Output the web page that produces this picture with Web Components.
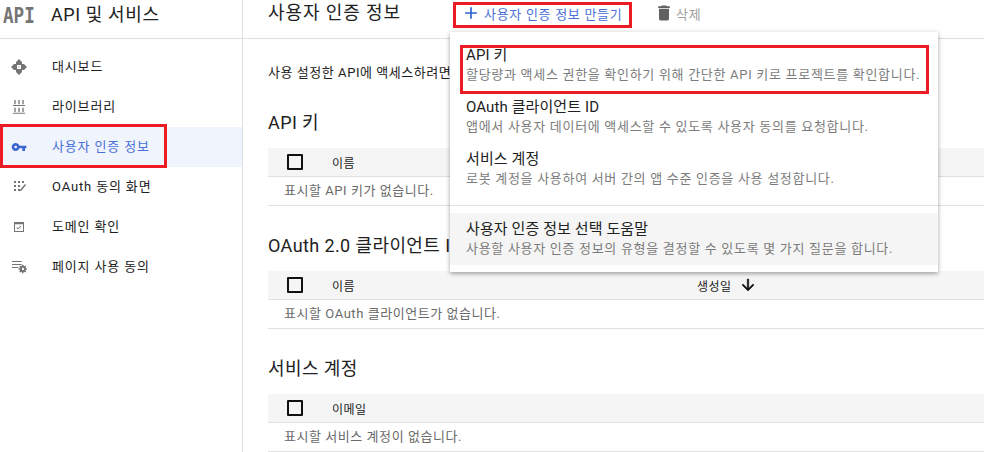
<!doctype html>
<html lang="ko">
<head>
<meta charset="utf-8">
<title>사용자 인증 정보</title>
<style>
  html, body { margin: 0; background: #fff; }
  body {
    font-family: Roboto, "Noto Sans CJK KR", sans-serif;
    color: #212121;
    overflow: hidden;
  }
</style>
</head>
<body>
<app-shell>
  <side-nav slot="side" heading="API 및 서비스">
    <nav-item icon="dashboard">대시보드</nav-item>
    <nav-item icon="library">라이브러리</nav-item>
    <nav-item icon="key" active>사용자 인증 정보</nav-item>
    <nav-item icon="consent">OAuth 동의 화면</nav-item>
    <nav-item icon="domain">도메인 확인</nav-item>
    <nav-item icon="usage">페이지 사용 동의</nav-item>
    <red-mark style="left:0;top:124px;width:167px;height:44px"></red-mark>
  </side-nav>

  <top-bar slot="top" heading="사용자 인증 정보"></top-bar>

  <intro-line>사용 설정한 API에 액세스하려면</intro-line>

  <cred-section heading="API 키" column="이름" empty="표시할 API 키가 없습니다."></cred-section>
  <cred-section heading="OAuth 2.0 클라이언트 I" column="이름" empty="표시할 OAuth 클라이언트가 없습니다." sort="생성일"></cred-section>
  <cred-section heading="서비스 계정" column="이메일" empty="표시할 서비스 계정이 없습니다."></cred-section>

  <drop-menu slot="over">
    <menu-item title="API 키" sub="할당량과 액세스 권한을 확인하기 위해 간단한 API 키로 프로젝트를 확인합니다."></menu-item>
    <menu-item title="OAuth 클라이언트 ID" sub="앱에서 사용자 데이터에 액세스할 수 있도록 사용자 동의를 요청합니다."></menu-item>
    <menu-item title="서비스 계정" sub="로봇 계정을 사용하여 서버 간의 앱 수준 인증을 사용 설정합니다."></menu-item>
    <hr>
    <menu-item hover title="사용자 인증 정보 선택 도움말" sub="사용할 사용자 인증 정보의 유형을 결정할 수 있도록 몇 가지 질문을 합니다."></menu-item>
  </drop-menu>

  <red-mark slot="over" style="left:453px;top:2px;width:179px;height:26px"></red-mark>
  <red-mark slot="over" style="left:460px;top:45px;width:469px;height:49px"></red-mark>
</app-shell>

<script type="module">
const ICONS = {
  dashboard: `<path d="M12 0l4.500 4.500V9h-9V4.500zM12 24l-4.500-4.500V15h9v4.500zM0 12l4.500-4.500H9v9H4.500zM24 12l-4.500 4.500H15v-9h4.500z"/><circle cx="12" cy="12" r="1.200" opacity=".5"/>`,
  library: `<path d="M5 1.500h2V8H5zM11 1.500h2V8h-2zM17 1.500h2V8h-2zM3 9h18v1.500H3zM5 13h2v6.500H5zM11 13h2v6.500h-2zM17 13h2v6.500h-2zM3 20.500h18V22H3z"/>`,
  key: `<path d="M12.65 10C11.83 7.67 9.61 6 7 6c-3.31 0-6 2.69-6 6s2.69 6 6 6c2.61 0 4.83-1.67 5.65-4H17v4h4v-4h2v-4H12.65zM7 14c-1.1 0-2-.9-2-2s.9-2 2-2 2 .9 2 2-.9 2-2 2z"/>`,
  consent: `<path d="M4.500 3h3v3h-3zM10.500 3h3v3h-3zM16.500 3h3v3h-3zM4.500 9h3v3h-3zM10.500 9h3v3h-3zM4.500 15h3v3h-3zM10.500 15h3v3h-3zM21 7.500l1.500 1.500-7 8.500-2.500 1 .8-2.500z"/>`,
  domain: `<path fill-rule="evenodd" d="M4.500 4.500h15v15h-15zM6 8v10h12V8z"/><path d="M10.500 15.800l-2.600-2.600.9-.9 1.700 1.700 3.700-3.700.9.9z"/>`,
  usage: `<path d="M1.500 3H16v1.500H1.500zM1.500 7.500H16V9H1.500zM1.500 12H11v1.500H1.500z"/><path transform="translate(1 -2.300)" d="M23 18.200v-1.800l-1.700-.4a4 4 0 0 0-.5-1.100l1-1.500-1.300-1.300-1.500 1a4 4 0 0 0-1.100-.5l-.4-1.700h-1.800l-.4 1.700a4 4 0 0 0-1.100.5l-1.500-1-1.300 1.300 1 1.500a4 4 0 0 0-.5 1.100l-1.700.4v1.800l1.700.4c.1.400.3.800.5 1.100l-1 1.500 1.300 1.300 1.500-1c.3.2.7.4 1.100.5l.4 1.700h1.800l.4-1.700c.4-.1.800-.3 1.100-.5l1.500 1 1.300-1.300-1-1.500c.2-.3.400-.7.500-1.100zM17 19a1.700 1.700 0 1 1 0-3.400 1.700 1.700 0 0 1 0 3.400z"/>`,
  plus: `<path d="M19 13h-6v6h-2v-6H5v-2h6V5h2v6h6v2z"/>`,
  trash: `<path d="M6 19c0 1.100.9 2 2 2h8c1.100 0 2-.9 2-2V7H6v12zM19 4h-3.500l-1-1h-5l-1 1H5v2h14V4z"/>`,
  down: `<path d="M20 12l-1.410-1.410L13 16.170V4h-2v12.170l-5.580-5.590L4 12l8 8 8-8z" stroke="currentColor" stroke-width=".7"/>`
};

const icon = (name, size) =>
  `<svg viewBox="0 0 24 24" width="${size}" height="${size}" fill="currentColor" aria-hidden="true">${ICONS[name]}</svg>`;

class AppShell extends HTMLElement {
  constructor() {
    super();
    this.attachShadow({ mode: 'open' }).innerHTML = `
      <style>
        :host { display: grid; grid-template-columns: 243px 741px; width: 989px; height: 452px; position: relative; overflow: hidden; }
        .main { display: flex; flex-direction: column; min-width: 0; }
        .body { padding-left: 25px; display: flex; flex-direction: column; }
      </style>
      <slot name="side"></slot>
      <div class="main">
        <slot name="top"></slot>
        <div class="body"><slot></slot></div>
      </div>
      <slot name="over"></slot>
    `;
  }
}

class SideNav extends HTMLElement {
  constructor() {
    super();
    this.attachShadow({ mode: 'open' }).innerHTML = `
      <style>
        :host { display: block; box-sizing: border-box; height: 452px; border-right: 1px solid #e0e0e0; }
        header { display: flex; align-items: center; height: 39px; box-sizing: border-box; border-bottom: 1px solid #e0e0e0; padding-bottom: 12px; }
        .logo { width: 51px; padding-left: 3px; margin-top: 4px; box-sizing: border-box; font: bold 22px "DejaVu Sans Mono", monospace; color: #757575; }
        .logo span { display: inline-block; transform: scaleX(.8); transform-origin: 0 50%; }
        h1 { margin: 0; font-size: 18px; font-weight: 400; letter-spacing: .6px; color: #212121; }
        nav { display: flex; flex-direction: column; padding-top: 8px; }
      </style>
      <header><span class="logo"><span>API</span></span><h1></h1></header>
      <nav><slot></slot></nav>
    `;
    this.shadowRoot.querySelector('h1').textContent = this.getAttribute('heading');
  }
}

class NavItem extends HTMLElement {
  constructor() {
    super();
    const name = this.getAttribute('icon');
    this.attachShadow({ mode: 'open' }).innerHTML = `
      <style>
        :host { display: flex; align-items: center; box-sizing: border-box; height: 40px; padding-left: 11px; font-size: 13px; letter-spacing: .85px; color: #212121; }
        :host([active]) { background: #f0f4fd; color: #4a6fd8; }
        svg { color: #757575; flex: none; }
        :host([active]) svg { color: #3b66d0; }
        span { margin: -4px 0 0 25px; }
      </style>
      ${icon(name, 16)}<span><slot></slot></span>
    `;
  }
}

class TopBar extends HTMLElement {
  constructor() {
    super();
    this.attachShadow({ mode: 'open' }).innerHTML = `
      <style>
        :host { display: flex; align-items: center; height: 39px; box-sizing: border-box; border-bottom: 1px solid #e0e0e0; padding: 0 0 16px 25px; }
        h2 { margin: 0; width: 193px; font-size: 18px; font-weight: 400; letter-spacing: .9px; white-space: nowrap; color: #212121; }
        .btn { display: inline-flex; align-items: center; font-size: 13px; letter-spacing: .7px; margin-top: 4px; }
        .make { color: #4a6fd8; width: 193px; }
        .make svg { color: #2f62cc; margin-right: 3px; }
        .del { color: #9e9e9e; }
        .del svg { color: #616161; margin-right: 2px; }
      </style>
      <h2></h2>
      <span class="btn make">${icon('plus', 20)}사용자 인증 정보 만들기</span>
      <span class="btn del">${icon('trash', 20)}삭제</span>
    `;
    this.shadowRoot.querySelector('h2').textContent = this.getAttribute('heading');
  }
}

class IntroLine extends HTMLElement {
  constructor() {
    super();
    this.attachShadow({ mode: 'open' }).innerHTML = `
      <style>
        :host { display: block; margin-top: 24px; height: 20px; line-height: 20px; font-size: 13px; letter-spacing: .55px; white-space: nowrap; color: #212121; }
      </style>
      <slot></slot>
    `;
  }
}

class CredSection extends HTMLElement {
  constructor() {
    super();
    const sort = this.getAttribute('sort');
    this.attachShadow({ mode: 'open' }).innerHTML = `
      <style>
        :host { display: block; margin-top: 28px; }
        h3 { margin: 0 0 13px; height: 24px; line-height: 24px; font-size: 18px; font-weight: 400; letter-spacing: .4px; white-space: nowrap; color: #212121; }
        .head { display: flex; align-items: center; box-sizing: border-box; height: 29px; background: #f5f5f5; border-bottom: 1px solid #e0e0e0; font-size: 12px; color: #212121; }
        .box { flex: none; box-sizing: border-box; width: 16px; height: 16px; margin-left: 19px; border: 2px solid #111; border-radius: 1px; }
        .col { margin-left: 29px; width: 365px; letter-spacing: .4px; }
        .sort { display: inline-flex; align-items: center; letter-spacing: .4px; }
        .sort svg { margin-left: 8px; color: #111; }
        .row { box-sizing: border-box; height: 29px; line-height: 27px; border-bottom: 1px solid #e0e0e0; padding-left: 16px; font-size: 13px; color: #6a6a6a; letter-spacing: .55px; }
      </style>
      <h3></h3>
      <div class="head">
        <span class="box"></span><span class="col"></span>
        ${sort ? `<span class="sort">${sort}${icon('down', 18)}</span>` : ''}
      </div>
      <div class="row"></div>
    `;
    const $ = s => this.shadowRoot.querySelector(s);
    $('h3').textContent = this.getAttribute('heading');
    $('.col').textContent = this.getAttribute('column');
    $('.row').textContent = this.getAttribute('empty');
  }
}

class DropMenu extends HTMLElement {
  constructor() {
    super();
    this.attachShadow({ mode: 'open' }).innerHTML = `
      <style>
        :host { position: absolute; left: 450px; top: 32px; width: 488px; height: 240px; box-sizing: border-box; padding-top: 7px; background: #fff; box-shadow: 0 2px 4px rgba(0,0,0,.28), 0 0 6px rgba(0,0,0,.1); display: flex; flex-direction: column; }
        ::slotted(hr) { border: 0; border-top: 1px solid #e0e0e0; margin: 10px 0 7px; width: 100%; }
      </style>
      <slot></slot>
    `;
  }
}

class MenuItem extends HTMLElement {
  constructor() {
    super();
    this.attachShadow({ mode: 'open' }).innerHTML = `
      <style>
        :host { display: block; height: 52px; box-sizing: border-box; padding: 6px 16px 0; white-space: nowrap; }
        :host([hover]) { background: #f5f5f5; }
        b { display: block; font-weight: 400; height: 20px; line-height: 20px; font-size: 15px; letter-spacing: .1px; color: #212121; }
        span { display: block; height: 20px; line-height: 20px; font-size: 13px; letter-spacing: .7px; color: #7c7c7c; }
      </style>
      <b></b><span></span>
    `;
    this.shadowRoot.querySelector('b').textContent = this.getAttribute('title');
    this.shadowRoot.querySelector('span').textContent = this.getAttribute('sub');
    this.removeAttribute('title');
  }
}

class RedMark extends HTMLElement {
  constructor() {
    super();
    this.attachShadow({ mode: 'open' }).innerHTML = `
      <style>
        :host { position: absolute; box-sizing: border-box; border: 3px solid #ed1c24; pointer-events: none; z-index: 2; }
      </style>
    `;
  }
}

customElements.define('app-shell', AppShell);
customElements.define('side-nav', SideNav);
customElements.define('nav-item', NavItem);
customElements.define('top-bar', TopBar);
customElements.define('intro-line', IntroLine);
customElements.define('cred-section', CredSection);
customElements.define('drop-menu', DropMenu);
customElements.define('menu-item', MenuItem);
customElements.define('red-mark', RedMark);
</script>
</body>
</html>
